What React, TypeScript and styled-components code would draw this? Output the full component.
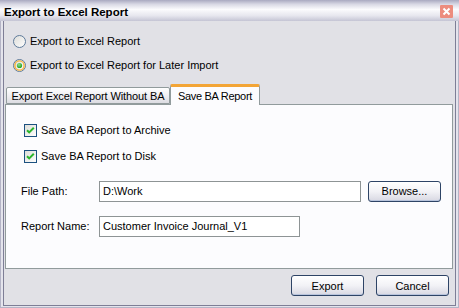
import { createGlobalStyle, styled } from "styled-components";

const GlobalStyle = createGlobalStyle`
  html, body {
    margin: 0;
    padding: 0;
    background: #ffffff;
  }
  body {
    font-family: "Liberation Sans", Arial, sans-serif;
    font-size: 11px;
    color: #000;
  }
`;

function RadioIcon({ checked }: { checked?: boolean }) {
  return (
    <svg width="13" height="13" viewBox="0 0 13 13">
      <defs>
        <linearGradient id="rg" x1="0" y1="0" x2="1" y2="1">
          <stop offset="0" stopColor="#dcdcd8" />
          <stop offset="1" stopColor="#ffffff" />
        </linearGradient>
        <radialGradient id="dot" cx="0.4" cy="0.35" r="0.7">
          <stop offset="0" stopColor="#8ee28e" />
          <stop offset="1" stopColor="#1a9a1a" />
        </radialGradient>
      </defs>
      <circle cx="6.5" cy="6.5" r="6" fill="url(#rg)" stroke="#5e7a9a" strokeWidth="1" />
      {checked && (
        <>
          <circle cx="6.5" cy="6.5" r="4.6" fill="none" stroke="#f8b33a" strokeWidth="1.4" />
          <circle cx="6.5" cy="6.5" r="2.6" fill="url(#dot)" />
        </>
      )}
    </svg>
  );
}

function CheckIcon() {
  return (
    <svg width="13" height="13" viewBox="0 0 13 13">
      <defs>
        <linearGradient id="cg" x1="0" y1="0" x2="1" y2="1">
          <stop offset="0" stopColor="#dcdcd7" />
          <stop offset="1" stopColor="#ffffff" />
        </linearGradient>
      </defs>
      <rect x="0.5" y="0.5" width="12" height="12" fill="url(#cg)" stroke="#1c5180" />
      <path d="M3 6.2 L5.2 8.4 L9.8 3.8" fill="none" stroke="#2bb52b" strokeWidth="2" />
    </svg>
  );
}

function App() {
  return (
    <>
      <GlobalStyle />
      <Window>
        <TitleBar>
          <Title>Export to Excel Report</Title>
          <CloseButton>
            <svg width="13" height="13" viewBox="0 0 13 13">
              <rect x="0" y="0" width="13" height="13" rx="1" fill="#ec8c7e" />
              <path d="M3.5 3.5 L9.5 9.5 M9.5 3.5 L3.5 9.5" stroke="#ffffff" strokeWidth="2" />
            </svg>
          </CloseButton>
        </TitleBar>
        <Frame>
          <RadioGroup>
            <OptionRow>
              <RadioIcon />
              <span>Export to Excel Report</span>
            </OptionRow>
            <OptionRow>
              <RadioIcon checked />
              <span>Export to Excel Report for Later Import</span>
            </OptionRow>
          </RadioGroup>

          <TabStrip>
            <Tab $width={164}>Export Excel Report Without BA</Tab>
            <Tab $width={90} $active>
              Save BA Report
            </Tab>
          </TabStrip>

          <Panel>
            <CheckRow>
              <CheckIcon />
              <span>Save BA Report to Archive</span>
            </CheckRow>
            <CheckRow>
              <CheckIcon />
              <span>Save BA Report to Disk</span>
            </CheckRow>

            <Fields>
              <FieldRow>
                <Label>File Path:</Label>
                <Input $width={262} value="D:\Work" readOnly />
                <Button $margin={7}>Browse...</Button>
              </FieldRow>
              <FieldRow>
                <Label>Report Name:</Label>
                <Input $width={201} value="Customer Invoice Journal_V1" readOnly />
              </FieldRow>
            </Fields>
          </Panel>

          <Footer>
            <Button>Export</Button>
            <Button>Cancel</Button>
          </Footer>
        </Frame>
      </Window>
    </>
  );
}

const Window = styled("div")`
  width: 459px;
  height: 308px;
  box-sizing: border-box;
  display: flex;
  flex-direction: column;
  background: #e4e4ec;
  box-shadow: inset 0 0 0 1px #b4b4c6;
`;

const TitleBar = styled("div")`
  height: 21px;
  flex: none;
  display: flex;
  align-items: center;
  justify-content: space-between;
  padding: 0 4px 0 4px;
  background: linear-gradient(
    to bottom,
    #a9a9c0 0%,
    #d8d8e4 20%,
    #fbfbfd 45%,
    #e6e6ee 75%,
    #c4c4d4 100%
  );
`;

const Title = styled("div")`
  font-weight: bold;
  font-size: 11.5px;
  padding-top: 2px;
`;

const CloseButton = styled("div")`
  width: 13px;
  height: 13px;
  margin-top: 2px;
  margin-right: 2px;
  svg {
    display: block;
  }
`;

const Frame = styled("div")`
  flex: 1;
  margin: 0 3px 2px 3px;
  border: 1px solid #7e7e96;
  border-top: none;
  background: #e1e1e6;
  display: flex;
  flex-direction: column;
  padding-top: 8px;
`;

const RadioGroup = styled("div")`
  display: flex;
  flex-direction: column;
  padding-left: 9px;
`;

const OptionRow = styled("label")`
  height: 24px;
  display: flex;
  align-items: center;
  gap: 4px;
  svg {
    flex: none;
  }
`;

const TabStrip = styled("div")`
  margin-top: 7px;
  height: 20px;
  display: flex;
  align-items: flex-end;
  padding-left: 2px;
  position: relative;
  z-index: 1;
`;

const Tab = styled("div")<{ $active?: boolean; $width: number }>`
  box-sizing: border-box;
  width: ${(p) => p.$width}px;
  height: ${(p) => (p.$active ? "21px" : "17px")};
  margin-bottom: ${(p) => (p.$active ? "-1px" : "0")};
  padding-top: ${(p) => (p.$active ? "0" : "1px")};
  border: 1px solid #919b9c;
  border-bottom: ${(p) => (p.$active ? "none" : "1px solid #919b9c")};
  border-top: ${(p) => (p.$active ? "3px solid #f3a536" : "1px solid #919b9c")};
  border-radius: 2px 2px 0 0;
  background: ${(p) =>
    p.$active ? "#fcfcfe" : "linear-gradient(to bottom, #ffffff, #ecebef 60%, #dcdce2)"};
  display: flex;
  align-items: center;
  justify-content: center;
  white-space: nowrap;
  font-size: 11px;
  letter-spacing: ${(p) => (p.$active ? "-0.3px" : "-0.1px")};
`;

const Panel = styled("div")`
  height: 165px;
  box-sizing: border-box;
  margin: 0 2px 0 1px;
  border: 1px solid #919b9c;
  background: #fcfcfe;
  padding: 12px 0 0 18px;
  display: flex;
  flex-direction: column;
`;

const CheckRow = styled("label")`
  height: 26px;
  display: flex;
  align-items: center;
  gap: 4px;
  svg {
    flex: none;
  }
`;

const Fields = styled("div")`
  margin-top: 11px;
  margin-left: -3px;
  display: flex;
  flex-direction: column;
  gap: 13px;
`;

const FieldRow = styled("div")`
  height: 22px;
  display: flex;
  align-items: center;
`;

const Label = styled("span")`
  width: 78px;
  flex: none;
`;

const Input = styled("input")<{ $width: number }>`
  width: ${(p) => p.$width}px;
  height: 21px;
  box-sizing: border-box;
  border: 1px solid #8e9495;
  background: #ffffff;
  padding: 0 3px;
  font-family: "Liberation Sans", Arial, sans-serif;
  font-size: 11px;
  color: #000;
  outline: none;
`;

const Button = styled("button")<{ $margin?: number }>`
  width: 73px;
  height: 21px;
  margin-left: ${(p) => p.$margin ?? 0}px;
  box-sizing: border-box;
  border: 1px solid #2e4466;
  border-radius: 3px;
  background: linear-gradient(to bottom, #ffffff 0%, #f2f2f6 50%, #d8d8e2 100%);
  box-shadow: inset 0 -1px 0 #b8c4dc, inset 0 1px 0 #ffffff;
  font-family: "Liberation Sans", Arial, sans-serif;
  font-size: 11px;
  color: #000;
  padding: 0;
`;

const Footer = styled("div")`
  display: flex;
  justify-content: flex-end;
  gap: 12px;
  padding: 6px 6px 0 0;
`;

export default App;
